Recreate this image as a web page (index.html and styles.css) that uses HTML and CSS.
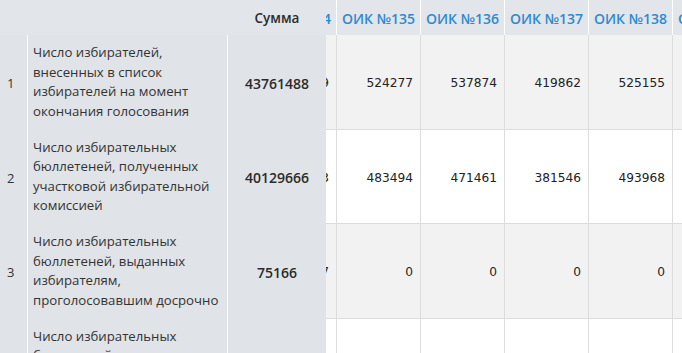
FILE: index.html
```html
<!DOCTYPE html>
<html lang="ru">
<head>
<meta charset="utf-8">
<title>Итоги</title>
<link rel="stylesheet" href="styles.css">
<script src="script.js" defer></script>
</head>
<body>
<div class="wrap" id="wrap">
<table class="grid">
<colgroup>
<col class="c-num"><col class="c-desc"><col class="c-sum">
<col class="c-d"><col class="c-d"><col class="c-d"><col class="c-d"><col class="c-d"><col class="c-d"><col class="c-d"><col class="c-d"><col class="c-d">
</colgroup>
<thead>
<tr>
<th class="fix num"></th>
<th class="fix desc"></th>
<th class="fix sum">Сумма</th>
<th class="oik">ОИК №132</th>
<th class="oik">ОИК №133</th>
<th class="oik">ОИК №134</th>
<th class="oik">ОИК №135</th>
<th class="oik">ОИК №136</th>
<th class="oik">ОИК №137</th>
<th class="oik">ОИК №138</th>
<th class="oik">ОИК №139</th>
<th class="oik">ОИК №140</th>
</tr>
</thead>
<tbody>
<tr class="odd">
<td class="fix num">1</td>
<td class="fix desc">Число избирателей, внесенных в список избирателей на момент окончания голосования</td>
<td class="fix sum">43761488</td>
<td class="val">498112</td><td class="val">512340</td><td class="val">530219</td>
<td class="val">524277</td><td class="val">537874</td><td class="val">419862</td><td class="val">525155</td><td class="val">486731</td><td class="val">501226</td>
</tr>
<tr class="even">
<td class="fix num">2</td>
<td class="fix desc">Число избирательных бюллетеней, полученных участковой избирательной комиссией</td>
<td class="fix sum">40129666</td>
<td class="val">455301</td><td class="val">468920</td><td class="val">489113</td>
<td class="val">483494</td><td class="val">471461</td><td class="val">381546</td><td class="val">493968</td><td class="val">447210</td><td class="val">462905</td>
</tr>
<tr class="odd">
<td class="fix num">3</td>
<td class="fix desc">Число избирательных бюллетеней, выданных избирателям, проголосовавшим досрочно</td>
<td class="fix sum">75166</td>
<td class="val">0</td><td class="val">0</td><td class="val">17</td>
<td class="val">0</td><td class="val">0</td><td class="val">0</td><td class="val">0</td><td class="val">0</td><td class="val">0</td>
</tr>
<tr class="even">
<td class="fix num">4</td>
<td class="fix desc">Число избирательных бюллетеней, выданных избирателям в помещении для голосования в день голосования</td>
<td class="fix sum">25711432</td>
<td class="val">301245</td><td class="val">298034</td><td class="val">310577</td>
<td class="val">312905</td><td class="val">320118</td><td class="val">254390</td><td class="val">318442</td><td class="val">289017</td><td class="val">300451</td>
</tr>
</tbody>
</table>
</div>
</body>
</html>
```

FILE: styles.css
```css
html, body {
  margin: 0;
  padding: 0;
  background: #ffffff;
}

.wrap {
  width: 682px;
  height: 353px;
  overflow-x: auto;
  overflow-y: hidden;
  scrollbar-width: none;
}
.wrap::-webkit-scrollbar { display: none; }

.grid {
  table-layout: fixed;
  border-collapse: separate;
  border-spacing: 0;
  width: 1082px;
  font-family: "Open Sans", "DejaVu Sans", sans-serif;
  color: #2b2b2b;
}

.c-num { width: 28px; }
.c-desc { width: 200px; }
.c-sum { width: 98px; }
.c-d { width: 84px; }

th, td {
  box-sizing: border-box;
  padding: 0;
}

thead th {
  height: 35px;
  background: #e2e5e9;
  font-size: 13px;
  font-weight: 600;
  white-space: nowrap;
  vertical-align: middle;
  padding-top: 1px;
}

.fix {
  position: sticky;
  z-index: 2;
  background: #e0e3e7;
}
.fix.num { left: 0; }
.fix.desc { left: 28px; }
.fix.sum { left: 228px; }

thead .fix { z-index: 3; background: #e2e5e9; }

thead .sum {
  color: #2d2d2d;
  text-align: center;
  font-size: 13.5px;
}

.oik {
  color: #2e8ad0;
  font-size: 14px;
  text-align: center;
  overflow: hidden;
  border-left: 1px solid #ffffff;
}

tbody td {
  vertical-align: middle;
}

tbody .num {
  border-right: 1px solid #ffffff;
  font-size: 13px;
  padding-left: 7px;
  padding-top: 2px;
  color: #333;
}

tbody .desc {
  border-right: 1px solid #ffffff;
  font-size: 13.2px;
  line-height: 19.5px;
  padding: 8px 0 8.5px 5px;
  color: #333;
}

tbody .sum {
  font-size: 14px;
  font-weight: 600;
  text-align: center;
  padding-top: 2px;
  color: #2b2b2b;
}

.val {
  font-family: "DejaVu Sans", Verdana, sans-serif;
  font-size: 12.2px;
  text-align: right;
  padding-right: 7px;
  padding-top: 3px;
  color: #222;
  border-left: 1px solid #dcdcdc;
  border-bottom: 1px solid #dcdcdc;
  white-space: nowrap;
  overflow: hidden;
}

.odd .val { background: #f2f2f2; }
.even .val { background: #ffffff; }
```

FILE: script.js
```js
document.addEventListener('DOMContentLoaded', function () {
  var w = document.getElementById('wrap');
  w.scrollLeft = 242;
});
```
